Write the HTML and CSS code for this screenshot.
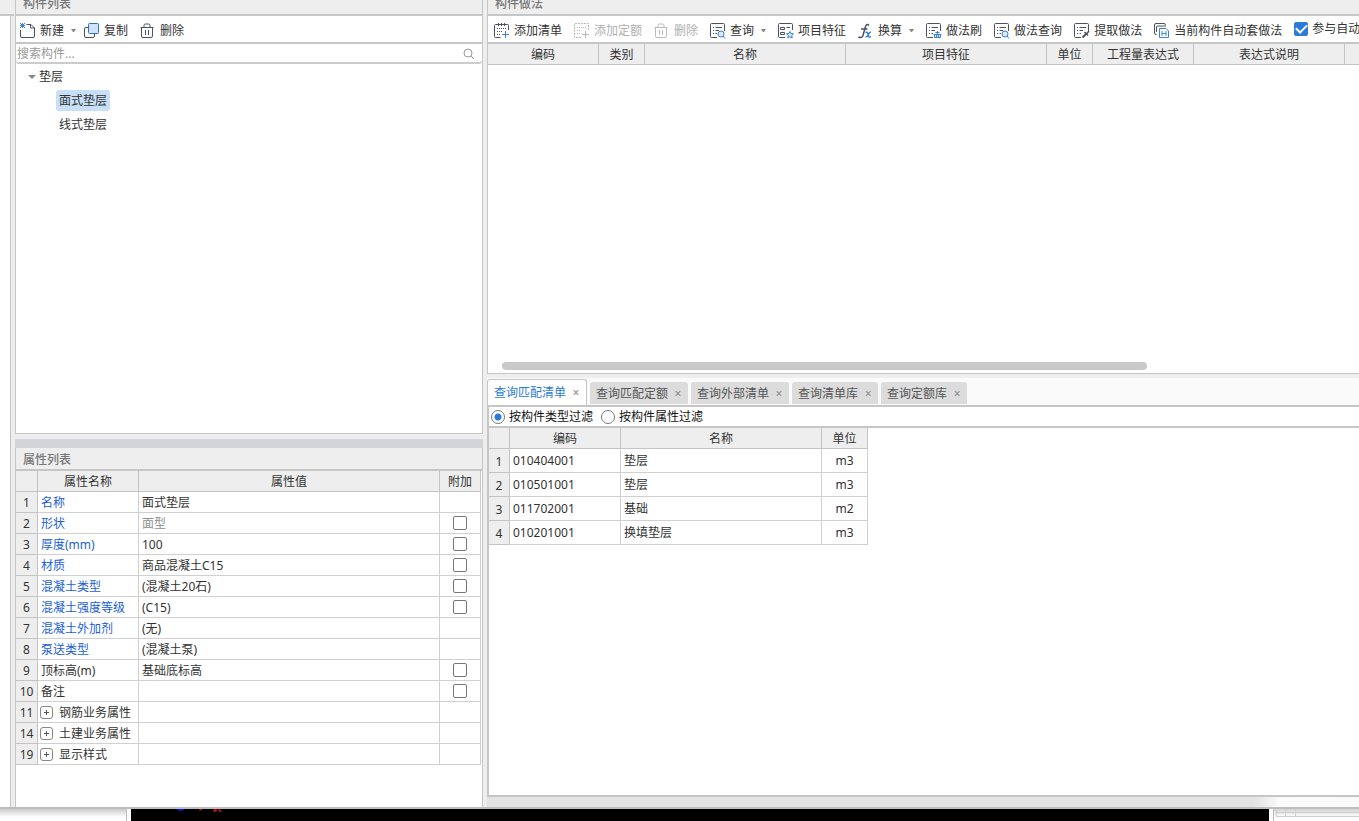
FILE: index.html
```html
<!DOCTYPE html>
<html lang="zh-CN">
<head>
<meta charset="utf-8">
<title>构件列表</title>
<link rel="stylesheet" href="styles.css">
</head>
<body>
<svg class="sprite" aria-hidden="true">
  <symbol id="i-trash" viewBox="0 0 16 16"><path d="M.5 4.500h13M4 4.500V2.500q0-1.500 1.500-1.500h3Q10 1 10 2.500v2M1.500 4.500v8.500q0 1.500 1.500 1.500h8q1.500 0 1.500-1.500V4.500" fill="none" stroke="currentColor"/><path class="bars" d="M5.500 7v5M8.500 7v5" fill="none"/></symbol>
  <symbol id="i-sheet" viewBox="0 0 16 16"><path d="M7 14.500H1.500q-1 0-1-1v-12q0-1 1-1h12q1 0 1 1V8" fill="none" stroke="currentColor"/><path d="M3 4.500h1M5.500 4.500H12M3 7.500h1M5.500 7.500H9M3 10.500h1M5.500 10.500H7" fill="none" stroke="currentColor"/></symbol>
  <symbol id="i-add" viewBox="0 0 16 16"><path d="M6.500 14.500h-5q-1 0-1-1v-11q0-1 1-1h12q1 0 1 1V7M4.500 0v3M7.500 0v3M10.500 0v3" fill="none" stroke="currentColor"/><path d="M3 5.500h9M3 8.500h5M3 11.500h3" fill="none" stroke="currentColor" stroke-dasharray="1 1"/><path class="accent" d="M8 11.500h7M11.500 8v7" fill="none"/></symbol>
  <symbol id="i-add-off" viewBox="0 0 16 16"><path d="M7 14.500H.5V.5h14V7" fill="none" stroke="currentColor" stroke-dasharray="2 1"/><path d="M3 4.500h9M3 7.500h4M3 10.500h3" fill="none" stroke="currentColor" stroke-dasharray="1 1"/><path d="M8 11.500h7M11.500 8v7" fill="none" stroke="currentColor"/></symbol>
</svg>

<main class="app">
  <div class="edge"><div class="panel-title"></div></div>

  <section class="left">
    <div class="list-panel">
      <h2 class="panel-title">构件列表</h2>
      <div class="toolbar toolbar-list">
        <button class="tool"><svg viewBox="0 0 16 16"><path d="M6.500 1.500H11l3.500 3.500v8q0 1.500-1.500 1.500H2Q.5 14.500.5 13V7M10.500 1.500V5h4" fill="none" stroke="currentColor"/><path class="accent" d="M0 0l5 5M5 0L0 5M2.500 0v5M0 2.500h5" fill="none"/></svg>新建<i class="caret"></i></button>
        <button class="tool tool-copy"><svg viewBox="0 0 16 16"><path d="M4.500 4.500H2Q.5 4.500.5 6v7q0 1.500 1.500 1.500h7q1.500 0 1.500-1.500v-2.500" fill="none" stroke="currentColor"/><rect x="4.500" y=".5" width="10" height="10" rx="1" fill="#cfe4fa" stroke="#2e73c4"/></svg>复制</button>
        <button class="tool tool-delete"><svg><use href="#i-trash"/></svg>删除</button>
      </div>
      <label class="search"><input type="text" placeholder="搜索构件..." aria-label="搜索构件"><svg viewBox="0 0 12 12"><circle cx="5" cy="5" r="4" fill="none" stroke="#999"/><path d="M8 8l3 3" stroke="#999"/></svg></label>
      <ul class="tree">
        <li><span class="node"><i class="caret open"></i>垫层</span>
          <ul>
            <li><span class="leaf selected">面式垫层</span></li>
            <li><span class="leaf">线式垫层</span></li>
          </ul>
        </li>
      </ul>
    </div>
    <div class="splitter"></div>
    <div class="props-panel">
      <h2 class="panel-title props-title">属性列表</h2>
      <table class="grid props">
        <colgroup><col class="w22"><col class="w101"><col><col class="w41"></colgroup>
        <thead><tr><th></th><th>属性名称</th><th>属性值</th><th>附加</th></tr></thead>
        <tbody>
          <tr><th>1</th><td class="link">名称</td><td>面式垫层</td><td></td></tr>
          <tr><th>2</th><td class="link">形状</td><td class="muted">面型</td><td class="mid"><input type="checkbox" aria-label="形状 附加"></td></tr>
          <tr><th>3</th><td class="link">厚度(mm)</td><td>100</td><td class="mid"><input type="checkbox" aria-label="厚度 附加"></td></tr>
          <tr><th>4</th><td class="link">材质</td><td>商品混凝土C15</td><td class="mid"><input type="checkbox" aria-label="材质 附加"></td></tr>
          <tr><th>5</th><td class="link">混凝土类型</td><td>(混凝土20石)</td><td class="mid"><input type="checkbox" aria-label="混凝土类型 附加"></td></tr>
          <tr><th>6</th><td class="link">混凝土强度等级</td><td>(C15)</td><td class="mid"><input type="checkbox" aria-label="混凝土强度等级 附加"></td></tr>
          <tr><th>7</th><td class="link">混凝土外加剂</td><td>(无)</td><td></td></tr>
          <tr><th>8</th><td class="link">泵送类型</td><td>(混凝土泵)</td><td></td></tr>
          <tr><th>9</th><td>顶标高(m)</td><td>基础底标高</td><td class="mid"><input type="checkbox" aria-label="顶标高 附加"></td></tr>
          <tr><th>10</th><td>备注</td><td></td><td class="mid"><input type="checkbox" aria-label="备注 附加"></td></tr>
          <tr><th>11</th><td><button class="expand" aria-label="展开"></button>钢筋业务属性</td><td></td><td></td></tr>
          <tr><th>14</th><td><button class="expand" aria-label="展开"></button>土建业务属性</td><td></td><td></td></tr>
          <tr><th>19</th><td><button class="expand" aria-label="展开"></button>显示样式</td><td></td><td></td></tr>
        </tbody>
      </table>
    </div>
  </section>

  <section class="right">
    <div class="method-panel">
      <h2 class="panel-title">构件做法</h2>
      <div class="toolbar toolbar-method">
        <button class="tool"><svg><use href="#i-add"/></svg>添加清单</button>
        <button class="tool" disabled><svg><use href="#i-add-off"/></svg>添加定额</button>
        <button class="tool" disabled><svg><use href="#i-trash"/></svg>删除</button>
        <button class="tool"><svg viewBox="0 0 16 16"><use href="#i-sheet"/><g class="accent" fill="#dcebfb"><circle cx="11" cy="11" r="3"/><path d="M13 13l2 2.500"/></g></svg>查询<i class="caret"></i></button>
        <button class="tool"><svg viewBox="0 0 16 16"><path d="M7 14.500H1.500q-1 0-1-1v-12q0-1 1-1h12q1 0 1 1V7M2.500 4.500h4v2h-4zM2.500 9.500h4v2h-4zM8.500 4.500H12" fill="none" stroke="currentColor"/><path class="accent" d="M12 8.500l1 2 2.500.3-1.800 1.700.5 2.500-2.200-1.200L9.800 15l.5-2.500-1.800-1.700 2.500-.3z" fill="#dcebfb"/></svg>项目特征</button>
        <button class="tool"><svg viewBox="0 0 16 16"><path d="M11 2.500Q9 0 7.500 3.500L5 12.500Q4 15.500.5 14M3 6h6.500" fill="none" stroke="currentColor" stroke-width="1.500"/><path class="accent" d="M7.500 9.500q2-1 2.500 1.500l.5 2q.5 2 2.500.5M13 9q-1.500 0-2.500 2.500t-3 2.500" fill="none" stroke-width="1.500"/></svg>换算<i class="caret"></i></button>
        <button class="tool"><svg viewBox="0 0 16 16"><use href="#i-sheet"/><path class="accent" d="M8.500 14.500v-3h6v3zM7.500 11.500h8M11.500 8v3M10.500 12v3M12.500 12v3M9.500 9.500h4" fill="#dcebfb"/></svg>做法刷</button>
        <button class="tool"><svg viewBox="0 0 16 16"><use href="#i-sheet"/><g class="accent" fill="#dcebfb"><circle cx="11" cy="11" r="3"/><path d="M13 13l2 2.500"/></g></svg>做法查询</button>
        <button class="tool"><svg viewBox="0 0 16 16"><use href="#i-sheet"/><path d="M8.500 14.500l4-4" stroke="currentColor" stroke-width="2"/><path d="M10.500 9l3.500 3.500M12.500 11l2.500-3" fill="none" stroke="currentColor" stroke-width="1.500"/></svg>提取做法</button>
        <button class="tool"><svg viewBox="0 0 16 16"><path d="M2.500 11.500H2Q.5 11.500.5 10V2Q.5.5 2 .5h8q1.500 0 1.500 1.500M2.500 9V4q0-1 1-1H12" fill="none" stroke="currentColor"/><path class="accent" d="M5.500 5.500H12l2.500 2.500v6.500h-9zM8 8v5M12 8v5M8 10.500h4" fill="#fff"/></svg>当前构件自动套做法</button>
        <label class="tool auto"><input type="checkbox" checked>参与自动</label>
      </div>
      <div class="method-grid">
        <table class="grid methods">
          <colgroup><col class="w111"><col class="w46"><col class="w201"><col class="w201"><col class="w46"><col class="w101"><col class="w151"><col></colgroup>
          <thead><tr><th>编码</th><th>类别</th><th>名称</th><th>项目特征</th><th>单位</th><th>工程量表达式</th><th>表达式说明</th><th></th></tr></thead>
        </table>
        <div class="scroll"><div class="thumb"></div></div>
      </div>
    </div>

    <nav class="tabs">
      <button class="tab active">查询匹配清单<span>×</span></button>
      <button class="tab">查询匹配定额<span>×</span></button>
      <button class="tab">查询外部清单<span>×</span></button>
      <button class="tab">查询清单库<span>×</span></button>
      <button class="tab">查询定额库<span>×</span></button>
    </nav>
    <div class="query-panel">
      <div class="filters">
        <label><input type="radio" name="filter" checked>按构件类型过滤</label>
        <label><input type="radio" name="filter">按构件属性过滤</label>
      </div>
      <table class="grid query">
        <colgroup><col class="w21"><col class="w111"><col class="w201"><col class="w46"></colgroup>
        <thead><tr><th></th><th>编码</th><th>名称</th><th>单位</th></tr></thead>
        <tbody>
          <tr><th>1</th><td>010404001</td><td>垫层</td><td class="mid">m3</td></tr>
          <tr><th>2</th><td>010501001</td><td>垫层</td><td class="mid">m3</td></tr>
          <tr><th>3</th><td>011702001</td><td>基础</td><td class="mid">m2</td></tr>
          <tr><th>4</th><td>010201001</td><td>换填垫层</td><td class="mid">m3</td></tr>
        </tbody>
      </table>
    </div>
    <div class="status"></div>
  </section>
</main>

<footer class="behind">
  <div class="behind-left"></div>
  <div class="canvas"><svg viewBox="0 0 100 12"><path d="M46 0h7v1h-2v1h-3V1h-2z" fill="#1414d8"/><path d="M68 0h4l-3 2zM83 0h2l1 1 3-1 2 3h-2l-2-2-3 2h-2z" fill="#a81818"/></svg></div>
  <div class="behind-right"><div class="ghost"></div></div>
</footer>
</body>
</html>
```
FILE: styles.css
```css
* { box-sizing: border-box; }

body {
  margin: 0;
  height: 100vh;
  overflow: hidden;
  display: flex;
  flex-direction: column;
  background: #eee;
  color: #333;
  font: 12px/16px "Noto Sans", "Noto Sans CJK SC", sans-serif;
}

button, input { font: inherit; color: inherit; margin: 0; }
button { border: 0; padding: 0; background: none; }
ul { list-style: none; margin: 0; padding: 0; }
.sprite { position: absolute; width: 0; height: 0; }

/* The window is scrolled so that the title bars are partly cut at the top. */
.app {
  flex: 1;
  min-height: 0;
  margin-top: -8px;
  display: flex;
  gap: 4px;
  border-bottom: 2px solid #bdbdbd;
}

.edge { width: 11px; background: #fff; border-right: 1px solid #c4c4c4; }

.panel-title {
  margin: 0;
  height: 24px;
  padding: 4px 7px 0;
  background: #eee;
  border-bottom: 2px solid #c6c6c6;
  color: #777;
  font-size: 12px;
  font-weight: 500;
  line-height: 16px;
}

.left {
  flex: 0 0 468px;
  display: flex;
  flex-direction: column;
}

.list-panel {
  flex: 0 0 442px;
  display: flex;
  flex-direction: column;
  background: #fff;
  border: 1px solid #c6c6c6;
  border-top: 0;
}

.toolbar {
  display: flex;
  align-items: center;
  height: 28px;
  padding-top: 3px;
  background: #fff;
  border-bottom: 2px solid #c6c6c6;
  white-space: nowrap;
}
.toolbar-list { gap: 8px; padding-left: 4px; }
.toolbar-method { gap: 12px; padding-left: 6px; }

.tool {
  display: flex;
  flex: none;
  align-items: center;
  gap: 4px;
}
.tool svg { width: 16px; height: 16px; color: #4a5261; }
.tool:disabled { color: #b0b0b0; }
.tool:disabled svg { color: #bbb; }
.tool .caret { margin-left: 3px; }
.tool-copy { padding-right: 4px; }
.accent { stroke: #3c82dc; }
.bars { stroke: currentColor; }
.tool-delete .bars { stroke: #c0504f; }
.auto { padding-bottom: 3px; }

.caret {
  width: 5px;
  border: solid transparent;
  border-width: 3px 2px 0;
  border-top-color: #888;
}
.caret.open { width: 8px; border-width: 4px 4px 0; }

.search {
  display: flex;
  align-items: center;
  height: 20px;
  padding: 1px 7px 0 0;
  border-bottom: 2px solid #ccc;
  border-radius: 3px;
}
.search input { flex: 1; min-width: 0; padding: 0 1px; border: 0; outline: 0; background: none; }
.search input::placeholder { color: #999; }
.search svg { width: 12px; height: 12px; }

.tree { padding: 1px 0 0 12px; }
.tree li { line-height: 24px; }
.node { display: flex; align-items: center; gap: 3px; }
.tree ul { padding-left: 28px; }
.tree ul li { display: flex; align-items: flex-start; height: 24px; }
.leaf { padding: 2px 3px; margin-top: 1px; border-radius: 3px; line-height: 17px; }
.selected { background: #c7dff7; }

.splitter {
  height: 14px;
  border-top: 5px solid #eee;
  background: #d3d4d9;
}

.props-panel {
  flex: 1;
  background: #fff;
  border: 1px solid #c6c6c6;
  border-width: 0 1px;
  padding-right: 1px;
}
.props-title { height: 23px; margin-right: -1px; }

.grid { table-layout: fixed; border-spacing: 0; }
.grid th, .grid td {
  height: 21px;
  padding: 2px 3px 0;
  border: solid #d0d0d0;
  border-width: 0 1px 1px 0;
  text-align: left;
  font-weight: 400;
  line-height: 16px;
  white-space: nowrap;
}
.grid th { padding: 2px 0 0; background: #eee; border-color: #c4c4c4; text-align: center; }
.grid .mid { text-align: center; }
.props { width: 100%; }
.props .mid { padding-top: 0; }
.link { color: #2160d8; }
.muted { color: #8e8e8e; }

.w21 { width: 21px; }
.w22 { width: 22px; }
.w41 { width: 41px; }
.w46 { width: 46px; }
.w101 { width: 101px; }
.w111 { width: 111px; }
.w151 { width: 151px; }
.w201 { width: 201px; }

input[type="checkbox"], input[type="radio"] {
  appearance: none;
  flex: none;
  width: 14px;
  height: 14px;
  border: 1px solid #777;
  border-radius: 2px;
  background: #fff;
}
.grid input { display: block; margin: 0 auto; }
input[type="checkbox"]:checked {
  display: grid;
  place-items: center;
  border-color: #2b7bd8;
  background: #2b7bd8;
}
input[type="checkbox"]:checked::before {
  content: "";
  width: 9px;
  height: 5px;
  border: solid #fff;
  border-width: 0 0 2px 2px;
  rotate: -45deg;
  margin-bottom: 3px;
}
input[type="radio"] { border-radius: 50%; }
input[type="radio"]:checked {
  background: radial-gradient(circle, #2b7bd8 3px, #fff 4px);
}

.expand {
  width: 13px;
  height: 13px;
  margin: 0 6px 0 -1px;
  border: 1px solid #888;
  border-radius: 3px;
  vertical-align: -1px;
  background:
    linear-gradient(#555, #555) center / 5px 1px no-repeat,
    linear-gradient(#555, #555) center / 1px 5px no-repeat;
}

.right {
  flex: 1;
  min-width: 0;
  display: flex;
  flex-direction: column;
}

.method-panel {
  flex: 0 0 382px;
  display: flex;
  flex-direction: column;
  background: #fff;
  border: 1px solid #c6c6c6;
  border-width: 0 0 1px 1px;
}
.method-grid {
  flex: 1;
  display: flex;
  flex-direction: column;
  justify-content: space-between;
}
.methods { width: 100%; }
.methods th:last-child { border-right: 0; }
.scroll { padding: 0 212px 3px 14px; }
.thumb { height: 8px; border-radius: 4px; background: #c9c9c9; }

.tabs {
  display: flex;
  align-items: flex-end;
  gap: 3px;
  height: 31px;
  border-top: 4px solid #eee;
  background: #fafafa;
}
.tab {
  display: flex;
  align-items: center;
  gap: 6px;
  height: 22px;
  padding: 1px 6px 0;
  margin-bottom: 1px;
  border-radius: 3px 3px 0 0;
  background: #dcdcdc;
  color: #555;
}
.tab span { width: 8px; color: #888; line-height: 12px; }
.tab.active {
  height: 26px;
  margin-bottom: 0;
  border: 1px solid #c6c6c6;
  border-bottom: 0;
  background: #fff;
  color: #2b7bd8;
}

.query-panel {
  flex: 1;
  min-height: 0;
  border: 2px solid #c6c6c6;
  border-right: 0;
  background: #fff;
}
.filters {
  display: flex;
  align-items: center;
  gap: 8px;
  height: 21px;
  padding-left: 2px;
  border-bottom: 2px solid #c6c6c6;
  color: #111;
}
.filters label { display: flex; align-items: center; gap: 4px; }
.query { width: 379px; }
.query tbody th, .query tbody td { height: 24px; }
.query tbody td { padding-top: 0; }

.status {
  height: 10px;
  background: linear-gradient(90deg, #e3e3e3 calc(100% - 105px), #fbfbfb calc(100% - 80px), #fafafa);
}

.behind { flex: none; display: flex; height: 12px; }
.behind-left {
  width: 131px;
  border-right: 4px solid #fff;
  background: linear-gradient(#ccc, #fff 8px);
  box-shadow: inset -1px 0 #bbb;
}
.canvas { flex: 1; background: #000; }
.canvas svg { display: block; width: 100px; height: 12px; }
.behind-right {
  width: 90px;
  padding-left: 3px;
  border-left: 4px solid #fff;
  background: linear-gradient(#d4d4d4, #fff 8px);
  box-shadow: inset 1px 0 #bbb;
}
.ghost {
  height: 8px;
  border: solid #d0d0d0;
  border-width: 0 0 1px 1px;
  background:
    linear-gradient(#d0d0d0, #d0d0d0) 8px 0 / 1px 8px no-repeat,
    linear-gradient(#d0d0d0, #d0d0d0) 18px 0 / 1px 8px no-repeat,
    linear-gradient(#d0d0d0, #d0d0d0) 0 3px / 100% 1px no-repeat;
}
```
